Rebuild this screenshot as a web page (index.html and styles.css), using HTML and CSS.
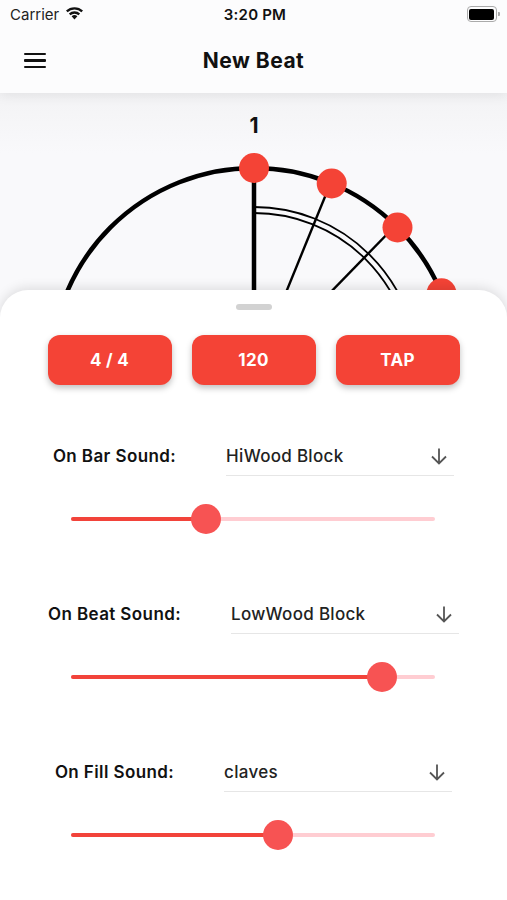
FILE: index.html
```html
<!DOCTYPE html>
<html lang="en">
<head>
    <meta charset="UTF-8">
    <meta name="viewport" content="width=device-width, initial-scale=1.0">
    <title>New Beat</title>
    <link rel="stylesheet" href="styles.css">
</head>

<body>
    <div class="screen">
        <header class="appbar">
            <div class="status-bar">
                <div class="status-left">
                    <span>Carrier</span>
                    <svg class="wifi" width="19" height="14" viewBox="0 0 19 14">
                        <path d="M9.5 13.5 L6.6 10.3 A4.2 4.2 0 0 1 12.4 10.3 Z" fill="#111"/>
                        <path d="M3.9 7.6 A8 8 0 0 1 15.1 7.6 L13.5 9.3 A5.7 5.7 0 0 0 5.5 9.3 Z" fill="#111"/>
                        <path d="M1 4.6 A12.2 12.2 0 0 1 18 4.6 L16.4 6.3 A9.8 9.8 0 0 0 2.6 6.3 Z" fill="#111"/>
                    </svg>
                </div>
                <span class="status-time">3:20 PM</span>
                <div class="status-right">
                    <div class="battery"><div class="battery-fill"></div></div>
                    <div class="battery-nub"></div>
                </div>
            </div>
            <div class="navbar">
                <button class="menu-btn" aria-label="Menu">
                    <span></span><span></span><span></span>
                </button>
                <h1 class="title">New Beat</h1>
            </div>
        </header>

        <div class="dial">
            <svg width="507" height="197" viewBox="0 0 507 197">
                <text x="254" y="40" text-anchor="middle" class="beat-num">1</text>
                <!-- inner double arc, first quarter -->
                <path d="M254 114 A164 164 0 0 1 418 278" fill="none" stroke="#000" stroke-width="1.8"/>
                <path d="M254 120 A158 158 0 0 1 412 278" fill="none" stroke="#000" stroke-width="1.8"/>
                <!-- spokes -->
                <line x1="331" y1="89" x2="254" y2="278" stroke="#000" stroke-width="2.4"/>
                <line x1="396" y1="132" x2="254" y2="278" stroke="#000" stroke-width="2.4"/>
                <line x1="254" y1="75" x2="254" y2="278" stroke="#000" stroke-width="4.5"/>
                <!-- outer ring -->
                <circle cx="254" cy="278" r="203" fill="none" stroke="#000" stroke-width="4.5"/>
                <circle cx="254" cy="75" r="15" class="dot"/>
                <circle cx="331.7" cy="90.5" r="15" class="dot"/>
                <circle cx="397.5" cy="134.5" r="15" class="dot"/>
                <circle cx="441.5" cy="200.3" r="15" class="dot"/>
            </svg>
        </div>

        <section class="sheet">
            <div class="handle"></div>

            <div class="actions">
                <button class="pill">4 / 4</button>
                <button class="pill">120</button>
                <button class="pill">TAP</button>
            </div>

            <div class="sound">
                <div class="sound-row">
                    <span class="sound-label">On Bar Sound:</span>
                    <div class="select">
                        <span>HiWood Block</span>
                        <svg class="arrow" width="18" height="18" viewBox="0 0 18 18"><path d="M9 1.5v14.5M2 9.5l7 7 7-7" fill="none" stroke="#555" stroke-width="1.8"/></svg>
                    </div>
                </div>
                <div class="slider">
                    <div class="track"><div class="track-fill" style="width: 37%"></div></div>
                    <div class="thumb" style="left: 37%"></div>
                </div>
            </div>

            <div class="sound">
                <div class="sound-row">
                    <span class="sound-label">On Beat Sound:</span>
                    <div class="select">
                        <span>LowWood Block</span>
                        <svg class="arrow" width="18" height="18" viewBox="0 0 18 18"><path d="M9 1.5v14.5M2 9.5l7 7 7-7" fill="none" stroke="#555" stroke-width="1.8"/></svg>
                    </div>
                </div>
                <div class="slider">
                    <div class="track"><div class="track-fill" style="width: 85.2%"></div></div>
                    <div class="thumb" style="left: 85.2%"></div>
                </div>
            </div>

            <div class="sound">
                <div class="sound-row">
                    <span class="sound-label">On Fill Sound:</span>
                    <div class="select">
                        <span>claves</span>
                        <svg class="arrow" width="18" height="18" viewBox="0 0 18 18"><path d="M9 1.5v14.5M2 9.5l7 7 7-7" fill="none" stroke="#555" stroke-width="1.8"/></svg>
                    </div>
                </div>
                <div class="slider">
                    <div class="track"><div class="track-fill" style="width: 56.6%"></div></div>
                    <div class="thumb" style="left: 56.6%"></div>
                </div>
            </div>
        </section>
    </div>
</body>
</html>
```

FILE: styles.css
```css
body {
    margin: 0;
    background: #f9f9fb;
    font-family: Inter, "Noto Sans", sans-serif;
    color: #111;
    overflow: hidden;
}

.screen {
    width: 507px;
    height: 900px;
    display: flex;
    flex-direction: column;
    overflow: hidden;
}

/* top bar */
.appbar {
    background: #fcfcfd;
    box-shadow: 0 2px 12px rgba(0, 0, 0, 0.08);
    position: relative;
    z-index: 2;
}

.status-bar {
    height: 28px;
    display: flex;
    align-items: center;
    justify-content: space-between;
    padding: 0 7px 0 10px;
    font-size: 15px;
}

.status-left {
    display: flex;
    align-items: center;
    gap: 6px;
    width: 110px;
    color: #222;
}

.wifi {
    margin-top: -3px;
}

.status-time {
    font-weight: 600;
    letter-spacing: 0.2px;
}

.status-right {
    width: 110px;
    display: flex;
    justify-content: flex-end;
    align-items: center;
}

.battery {
    width: 25px;
    height: 11px;
    border: 1.5px solid #aaa;
    border-radius: 4px;
    padding: 1.5px;
}

.battery-fill {
    height: 100%;
    background: #000;
    border-radius: 2px;
}

.battery-nub {
    width: 2px;
    height: 4px;
    background: #aaa;
    border-radius: 0 1px 1px 0;
    margin-left: 1px;
}

.navbar {
    height: 65px;
    display: flex;
    align-items: center;
}

.menu-btn {
    background: none;
    border: none;
    padding: 0;
    margin-left: 24px;
    width: 22px;
    display: flex;
    flex-direction: column;
    gap: 4px;
    cursor: pointer;
}

.menu-btn span {
    display: block;
    height: 2.5px;
    background: #111;
    border-radius: 1px;
}

.title {
    flex: 1;
    margin: 0 46px 0 0;
    text-align: center;
    font-size: 21px;
    font-weight: 700;
    letter-spacing: 0.5px;
}

/* dial */
.dial {
    height: 197px;
    overflow: hidden;
    background: linear-gradient(#f3f3f5, #f9f9fb 60px);
}

.dial svg {
    display: block;
}

.beat-num {
    font-family: Inter, sans-serif;
    font-size: 21px;
    font-weight: 700;
    fill: #111;
}

.dot {
    fill: #f44336;
}

/* bottom sheet */
.sheet {
    flex: 1;
    background: #fff;
    border-radius: 28px 28px 0 0;
    box-shadow: 0 -2px 12px rgba(0, 0, 0, 0.12);
    position: relative;
    z-index: 3;
    display: flex;
    flex-direction: column;
    align-items: center;
}

.handle {
    width: 36px;
    height: 6px;
    background: #d2d2d2;
    border-radius: 3px;
    margin-top: 14px;
}

.actions {
    display: flex;
    gap: 20px;
    margin-top: 25px;
}

.pill {
    width: 124px;
    height: 50px;
    border: none;
    border-radius: 12px;
    background: #f44336;
    color: #fff;
    font-family: Inter, sans-serif;
    font-size: 17px;
    font-weight: 700;
    letter-spacing: 0.3px;
    box-shadow: 0 3px 6px rgba(0, 0, 0, 0.25);
    cursor: pointer;
}

.sound {
    display: flex;
    flex-direction: column;
    align-items: center;
    margin-top: 51px;
}

.sound + .sound {
    margin-top: 60px;
}

.sound-row {
    display: flex;
    align-items: center;
    gap: 50px;
}

.sound-label {
    font-size: 17px;
    font-weight: 600;
    letter-spacing: 0.4px;
    color: #111;
}

.select {
    width: 228px;
    height: 39px;
    border-bottom: 1px solid #e6e6e6;
    display: flex;
    align-items: center;
    justify-content: space-between;
    font-size: 17px;
    font-weight: 500;
    letter-spacing: 0.3px;
    color: #222;
}

.arrow {
    margin-right: 6px;
}

.slider {
    position: relative;
    width: 364px;
    height: 30px;
    margin-top: 28px;
    display: flex;
    align-items: center;
}

.track {
    width: 100%;
    height: 4px;
    border-radius: 2px;
    background: #ffcdd2;
}

.track-fill {
    height: 100%;
    border-radius: 2px;
    background: #f2433a;
}

.thumb {
    position: absolute;
    top: 0;
    width: 30px;
    height: 30px;
    margin-left: -15px;
    border-radius: 50%;
    background: #f75353;
}
```
